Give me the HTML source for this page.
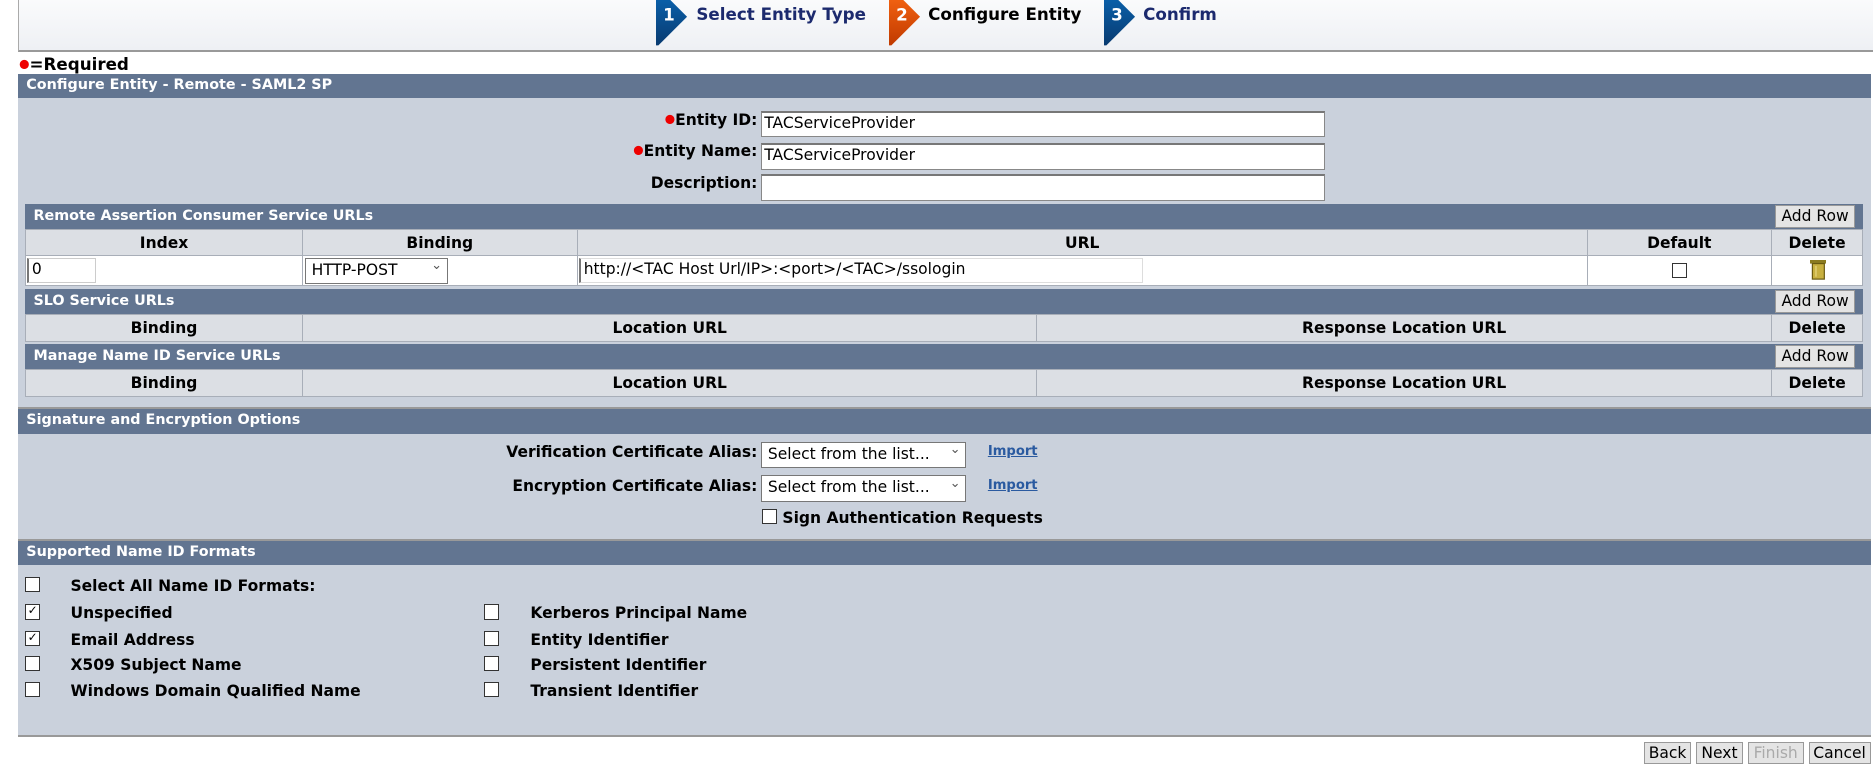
<!DOCTYPE html>
<html><head><meta charset="utf-8"><style>
html{zoom:1.19452}
body{margin:0;width:1568px;height:640px;position:relative;background:#fff;font-family:"DejaVu Sans","Liberation Sans",sans-serif;font-size:13px;font-weight:bold;color:#000;overflow:hidden}
.a{position:absolute;white-space:nowrap}
.hdr{position:absolute;left:15px;right:0;top:0;height:42px;border-left:1px solid #aaa;border-bottom:2px solid #999;background:linear-gradient(#fafbfc,#eef0f4)}
.bar{position:absolute;background:#627591;color:#fff;font-size:12px;line-height:21px;padding-left:7px;box-sizing:border-box}
.panel{position:absolute;left:15px;width:1551px;top:62px;height:553px;background:#cad1dc;border-bottom:2px solid #999}
.inp{position:absolute;background:#fff;border:1px solid #888;border-top:2px solid #777;box-sizing:border-box;font-weight:normal;font-size:13px;line-height:18px;padding-left:2px}
table{position:absolute;border-collapse:collapse;left:21px;width:1539px}
td{border:1px solid #a8aeb8;text-align:center;background:#dcdfe4;height:21px;padding:0}
.btn{position:absolute;background:#e4e4e4;border:1px solid #999;font-weight:normal;font-size:13px;text-align:center;line-height:18px;box-sizing:border-box}
.cb{position:absolute;width:11px;height:11px;border:1px solid #333;background:#fff;font-size:10px;line-height:10px;font-weight:normal;text-align:center}
.red{color:#e00;font-size:10px;vertical-align:2px}
.sel{position:absolute;background:#fff;border:1px solid #777;box-sizing:border-box;font-weight:normal;font-size:13px;line-height:19px;padding-left:5px}
.sel:after{content:"⌄";position:absolute;right:4px;top:-3px;font-size:11px;color:#555}
.imp{position:absolute;color:#2a5aa0;text-decoration:underline;font-size:11px}
</style></head><body>
<div class="hdr"></div>
<svg class="a" style="left:549px;top:0" width="28" height="40"><defs><linearGradient id="b" x1="0" y1="0" x2="0" y2="1"><stop offset="0" stop-color="#0a5fa8"/><stop offset="1" stop-color="#083a70"/></linearGradient><linearGradient id="o" x1="0" y1="0" x2="0" y2="1"><stop offset="0" stop-color="#f06010"/><stop offset="1" stop-color="#c03a00"/></linearGradient></defs><polygon points="0,0 12,0 26,14 2,38 0,38" fill="url(#b)"/><text x="6" y="17" fill="#fff" font-size="14" font-weight="bold" font-family="DejaVu Sans">1</text></svg>
<div class="a" style="left:583px;top:3px;color:#1c2a6e;font-size:14px">Select Entity Type</div>
<svg class="a" style="left:744px;top:0" width="28" height="40"><polygon points="0,0 12,0 26,14 2,38 0,38" fill="url(#o)"/><text x="6" y="17" fill="#fff" font-size="14" font-weight="bold" font-family="DejaVu Sans">2</text></svg>
<div class="a" style="left:777px;top:3px;font-size:14px">Configure Entity</div>
<svg class="a" style="left:924px;top:0" width="28" height="40"><polygon points="0,0 12,0 26,14 2,38 0,38" fill="url(#b)"/><text x="6" y="17" fill="#fff" font-size="14" font-weight="bold" font-family="DejaVu Sans">3</text></svg>
<div class="a" style="left:957px;top:3px;color:#1c2a6e;font-size:14px">Confirm</div>

<div class="a" style="left:16px;top:45px;font-size:14px"><span class="red">●</span>=Required</div>

<div class="panel"></div>
<div class="bar" style="left:15px;width:1551px;top:62px;height:20px;line-height:20px">Configure Entity - Remote - SAML2 SP</div>

<div class="a" style="right:934px;top:93px"><span class="red">●</span>Entity ID:</div>
<div class="inp" style="left:637px;top:93px;width:472px;height:22px">TACServiceProvider</div>
<div class="a" style="right:934px;top:119px"><span class="red">●</span>Entity Name:</div>
<div class="inp" style="left:637px;top:120px;width:472px;height:22px">TACServiceProvider</div>
<div class="a" style="right:934px;top:146px">Description:</div>
<div class="inp" style="left:637px;top:146px;width:472px;height:22px"></div>

<div class="bar" style="left:21px;width:1539px;top:171px;height:21px">Remote Assertion Consumer Service URLs</div>
<div class="btn" style="left:1486px;top:172px;width:67px;height:19px">Add Row</div>
<table style="top:192px"><tr><td style="width:231px">Index</td><td style="width:229px">Binding</td><td style="width:845px">URL</td><td style="width:153px">Default</td><td>Delete</td></tr>
<tr><td style="background:#fff;height:24px"></td><td style="background:#fff"></td><td style="background:#fff"></td><td style="background:#fff"></td><td style="background:#fff"></td></tr></table>
<div class="inp" style="left:23px;top:216px;width:57px;height:21px;border:1px solid #ccc;border-left:2px solid #777">0</div>
<div class="sel" style="left:255px;top:216px;width:120px;height:22px">HTTP-POST</div>
<div class="inp" style="left:485px;top:216px;width:472px;height:21px;border:1px solid #ddd;border-left:2px solid #777">http://&lt;TAC Host Url/IP&gt;:&lt;port&gt;/&lt;TAC&gt;/ssologin</div>
<div class="cb" style="left:1400px;top:220px"></div>
<svg class="a" style="left:1515px;top:218px" width="14" height="17"><rect x="0" y="0" width="14" height="3" fill="#8a7a20"/><rect x="2" y="3" width="10" height="13" fill="#c8b040" stroke="#6a5a10"/><line x1="5" y1="5" x2="5" y2="14" stroke="#e8d880"/></svg>

<div class="bar" style="left:21px;width:1539px;top:242px;height:21px">SLO Service URLs</div>
<div class="btn" style="left:1486px;top:243px;width:67px;height:19px">Add Row</div>
<table style="top:263px"><tr><td style="width:231px;height:22px">Binding</td><td style="width:614px">Location URL</td><td style="width:614px">Response Location URL</td><td>Delete</td></tr></table>

<div class="bar" style="left:21px;width:1539px;top:288px;height:21px">Manage Name ID Service URLs</div>
<div class="btn" style="left:1486px;top:289px;width:67px;height:19px">Add Row</div>
<table style="top:309px"><tr><td style="width:231px;height:22px">Binding</td><td style="width:614px">Location URL</td><td style="width:614px">Response Location URL</td><td>Delete</td></tr></table>

<div class="bar" style="left:15px;width:1551px;top:341px;height:22px;border-top:2px solid #999;line-height:20px">Signature and Encryption Options</div>
<div class="a" style="right:934px;top:371px">Verification Certificate Alias:</div>
<div class="sel" style="left:637px;top:370px;width:172px;height:22px">Select from the list...</div>
<div class="imp" style="left:827px;top:372px">Import</div>
<div class="a" style="right:934px;top:399px">Encryption Certificate Alias:</div>
<div class="sel" style="left:637px;top:398px;width:172px;height:22px">Select from the list...</div>
<div class="imp" style="left:827px;top:400px">Import</div>
<div class="cb" style="left:638px;top:426px"></div>
<div class="a" style="left:655px;top:426px">Sign Authentication Requests</div>

<div class="bar" style="left:15px;width:1551px;top:451px;height:22px;border-top:2px solid #999;line-height:20px">Supported Name ID Formats</div>
<div class="cb" style="left:21px;top:483px"></div><div class="a" style="left:59px;top:483px">Select All Name ID Formats:</div>
<div class="cb" style="left:21px;top:506px">✓</div><div class="a" style="left:59px;top:506px">Unspecified</div>
<div class="cb" style="left:21px;top:528px">✓</div><div class="a" style="left:59px;top:528px">Email Address</div>
<div class="cb" style="left:21px;top:549px"></div><div class="a" style="left:59px;top:549px">X509 Subject Name</div>
<div class="cb" style="left:21px;top:571px"></div><div class="a" style="left:59px;top:571px">Windows Domain Qualified Name</div>
<div class="cb" style="left:405px;top:506px"></div><div class="a" style="left:444px;top:506px">Kerberos Principal Name</div>
<div class="cb" style="left:405px;top:528px"></div><div class="a" style="left:444px;top:528px">Entity Identifier</div>
<div class="cb" style="left:405px;top:549px"></div><div class="a" style="left:444px;top:549px">Persistent Identifier</div>
<div class="cb" style="left:405px;top:571px"></div><div class="a" style="left:444px;top:571px">Transient Identifier</div>

<div class="btn" style="left:1376px;top:621px;width:40px;height:19px">Back</div>
<div class="btn" style="left:1420px;top:621px;width:39px;height:19px">Next</div>
<div class="btn" style="left:1463px;top:621px;width:47px;height:19px;color:#aaa">Finish</div>
<div class="btn" style="left:1514px;top:621px;width:52px;height:19px">Cancel</div>
</body></html>
